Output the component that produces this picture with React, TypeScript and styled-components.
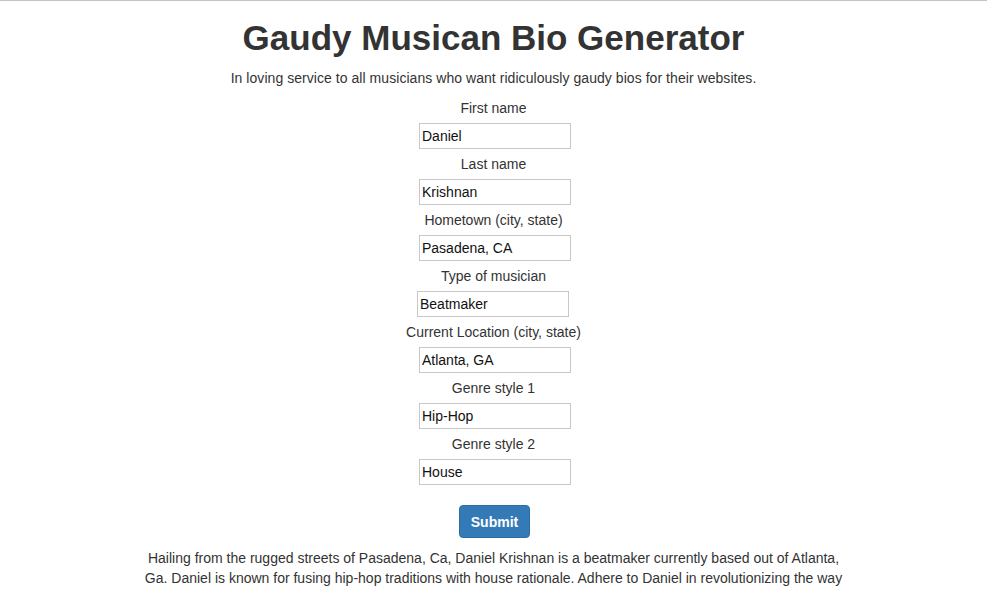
import React from "react";
import styled, { createGlobalStyle } from "styled-components";

const Global = createGlobalStyle`
  html, body { margin: 0; padding: 0; background: #fff; }
  body {
    border-top: 1px solid #c4c4c4;
    font-family: "Liberation Sans", Arial, Helvetica, sans-serif;
    font-size: 14px;
    line-height: 20px;
    color: #333;
  }
  * { box-sizing: border-box; }
`;

const Container = styled.div`
  width: 750px;
  margin: 0 auto;
  padding: 0 15px;
  text-align: center;
`;

const Title = styled.h1`
  margin: 17px 0 10px;
  font-size: 35px;
  line-height: 39.6px;
  font-weight: 700;
  color: #333;
`;

const Lead = styled.p`
  margin: 0 0 10px;
  letter-spacing: 0.05px;
`;

const Form = styled.form`
  display: flex;
  flex-direction: column;
  align-items: center;
`;

const Label = styled.label`
  display: block;
  margin-bottom: 5px;
  line-height: 20px;
`;

const Input = styled.input<{ $shift?: number }>`
  width: 152px;
  height: 26px;
  margin: 0 0 5px ${(p) => p.$shift ?? 3}px;
  padding: 1px 2px;
  border: 1px solid #c8c8c8;
  border-radius: 0;
  font-family: "Liberation Sans", Arial, Helvetica, sans-serif;
  font-size: 14px;
  color: #111;
  background: #fff;
  outline: none;
`;

const Button = styled.button`
  margin: 15px 0 0 2px;
  height: 33px;
  padding: 6px 11px;
  border: 1px solid #2e6da4;
  border-radius: 4px;
  background: #337ab7;
  color: #fff;
  font-family: "Liberation Sans", Arial, Helvetica, sans-serif;
  font-size: 14px;
  font-weight: 700;
  line-height: 20px;
  cursor: pointer;
`;

const Bio = styled.p`
  max-width: 712px;
  margin: 10px auto 10px;
`;

const fields: { label: string; value: string; shift?: number }[] = [
  { label: "First name", value: "Daniel" },
  { label: "Last name", value: "Krishnan" },
  { label: "Hometown (city, state)", value: "Pasadena, CA" },
  { label: "Type of musician", value: "Beatmaker", shift: -1 },
  { label: "Current Location (city, state)", value: "Atlanta, GA" },
  { label: "Genre style 1", value: "Hip-Hop" },
  { label: "Genre style 2", value: "House" },
];

export default function App() {
  return (
    <>
      <Global />
      <Container>
        <Title>Gaudy Musican Bio Generator</Title>
        <Lead>In loving service to all musicians who want ridiculously gaudy bios for their websites.</Lead>
        <Form onSubmit={(e) => e.preventDefault()}>
          {fields.map((f) => (
            <React.Fragment key={f.label}>
              <Label>{f.label}</Label>
              <Input $shift={f.shift} defaultValue={f.value} />
            </React.Fragment>
          ))}
          <Button type="submit">Submit</Button>
        </Form>
        <Bio>
          Hailing from the rugged streets of Pasadena, Ca, Daniel Krishnan is a beatmaker currently based out of Atlanta,
          Ga. Daniel is known for fusing hip-hop traditions with house rationale. Adhere to Daniel in revolutionizing the way
          the world hears beatmaking, one track at a time.
        </Bio>
      </Container>
    </>
  );
}
